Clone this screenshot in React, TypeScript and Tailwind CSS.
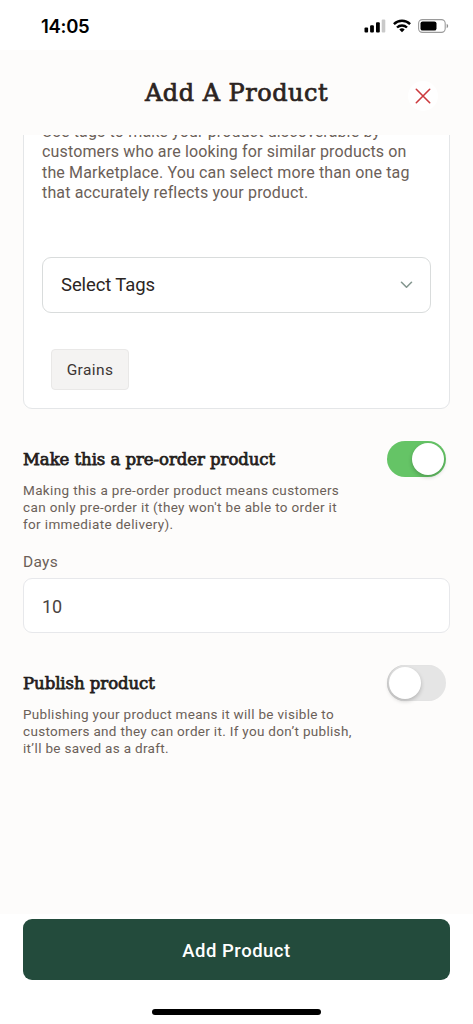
import { useState } from "react";

function StatusBar() {
  return (
    <div className="flex h-[50px] shrink-0 items-start justify-between bg-white pl-[41px] pr-[24px] pt-[13px]">
      <span className="font-['Inter',sans-serif] text-[18.5px] font-semibold leading-[26px] tracking-[-0.3px] text-black">14:05</span>
      <div className="flex items-center pt-[5px]">
        <svg width="22" height="16" viewBox="0 0 22 16">
          <rect x="0.5" y="9.5" width="3.6" height="5" rx="1" />
          <rect x="6.1" y="7.3" width="3.8" height="7.2" rx="1" />
          <rect x="12" y="4.2" width="3.8" height="10.3" rx="1" />
          <rect x="17.7" y="1.4" width="3.6" height="13.1" rx="1" fill="#c9c9c9" />
        </svg>
        <svg className="ml-[7px]" width="18" height="16" viewBox="0 0 18 16" fill="none" stroke="#000" strokeWidth="2.4">
          <path d="M0.9 6.1a11.6 11.6 0 0 1 16.2 0" />
          <path d="M4 9.5a7.2 7.2 0 0 1 10 0" />
          <path d="M9 14.3 6.3 11.5a4 4 0 0 1 5.4 0z" fill="#000" stroke="none" />
        </svg>
        <svg className="ml-[7px]" width="31" height="16" viewBox="0 0 31 16">
          <rect x="0.6" y="1.6" width="26.6" height="12.8" rx="3.8" fill="none" stroke="#9a9a9a" strokeWidth="1.1" />
          <rect x="2.5" y="3.4" width="16" height="9.2" rx="2.2" />
          <path d="M28.7 5.8c2 .8 2 3.6 0 4.4z" fill="#8c8c8c" />
        </svg>
      </div>
    </div>
  );
}

function Toggle({ on, onChange }: { on: boolean; onChange: () => void }) {
  return (
    <button
      role="switch"
      aria-checked={on}
      onClick={onChange}
      className={`mr-[4px] flex h-[36px] w-[59px] shrink-0 items-center rounded-full px-[2px] ${
        on ? "justify-end bg-[#65c466]" : "justify-start bg-[#e5e5e5] shadow-[inset_1px_0_1px_#cfcfcf]"
      }`}
    >
      <span className="h-[32px] w-[32px] rounded-full bg-white shadow-[0_2px_4px_rgba(0,0,0,0.22)]" />
    </button>
  );
}

export default function App() {
  const [preOrder, setPreOrder] = useState(true);
  const [publish, setPublish] = useState(false);

  return (
    <div className="flex h-screen w-full flex-col overflow-hidden bg-[#fdfcfb] font-['Roboto',sans-serif] text-[#6b6058]">
      <StatusBar />

      <div className="flex h-[85px] shrink-0 items-start">
        <div className="w-[65px]" />
        <h1 className="flex-1 whitespace-nowrap pt-[27px] text-center font-['DejaVu_Serif',serif] text-[24px] leading-[32px] tracking-[0.5px] text-[#2b2321] [-webkit-text-stroke:0.7px_#2b2321]">
          Add A Product
        </h1>
        <button aria-label="Close" className="mr-[35px] mt-[31px] flex h-[30px] w-[30px] items-center justify-center rounded-full bg-white">
          <svg width="16" height="16" viewBox="0 0 16 16" stroke="#cc3a3e" strokeWidth="1.6" strokeLinecap="round">
            <path d="M1.3 1.3 14.7 14.7M14.7 1.3 1.3 14.7" />
          </svg>
        </button>
      </div>

      {/* form, scrolled part of the way down */}
      <div className="flex-1 overflow-hidden px-[23px]">
        <div className="-mt-[34px] h-[308px] rounded-[9px] border border-[#e4e6e8] bg-white px-[18px] pt-[20px]">
          <p className="whitespace-nowrap text-[16px] leading-[20.4px] tracking-[0.15px]">
            Use tags to make your product discoverable by
            <br />
            customers who are looking for similar products on
            <br />
            the Marketplace. You can select more than one tag
            <br />
            that accurately reflects your product.
          </p>
          <button className="mt-[53px] flex h-[56px] w-full items-center justify-between rounded-[9px] border border-[#d9dcdc] pl-[18px] pr-[17px] text-[18.5px] tracking-[-0.1px] text-[#2b2523]">
            <span className="pt-[3px]">Select Tags</span>
            <svg width="13" height="8" viewBox="0 0 13 8" fill="none" stroke="#84968f" strokeWidth="1.6" strokeLinecap="round" strokeLinejoin="round">
              <path d="M1.5 1.3 6.5 6.2 11.5 1.3" />
            </svg>
          </button>
          <span className="ml-[9px] mt-[36px] flex h-[41px] w-[78px] items-center justify-center rounded-[4px] border border-[#e9e8e7] bg-[#f4f3f2] pt-[2px] text-[15.5px] tracking-[0.4px] text-[#3b3533]">
            Grains
          </span>
        </div>

        <div className="mt-[32px] flex justify-between">
          <div className="whitespace-nowrap">
            <h2 className="mt-[6px] font-['DejaVu_Serif',serif] text-[16.5px] leading-[26px] tracking-[-0.05px] text-[#241d1b] [-webkit-text-stroke:0.75px_#241d1b]">
              Make this a pre-order product
            </h2>
            <p className="mt-[9px] text-[13.5px] leading-[17px] tracking-[0.36px]">
              Making this a pre-order product means customers
              <br />
              can only pre-order it (they won't be able to order it
              <br />
              for immediate delivery).
            </p>
          </div>
          <Toggle on={preOrder} onChange={() => setPreOrder(!preOrder)} />
        </div>

        <label className="mt-[18px] block text-[15.5px] leading-[22px] tracking-[0.3px]">
          Days
          <input
            defaultValue="10"
            className="mt-[5px] block h-[55px] w-full rounded-[9px] border border-[#e7e8eb] bg-white px-[18px] pt-px text-[18px] tracking-[0px] text-[#4a4340]"
          />
        </label>

        <div className="mt-[32px] flex justify-between">
          <div className="whitespace-nowrap">
            <h2 className="mt-[6px] font-['DejaVu_Serif',serif] text-[16.5px] leading-[26px] tracking-[-0.05px] text-[#241d1b] [-webkit-text-stroke:0.75px_#241d1b]">
              Publish product
            </h2>
            <p className="mt-[9px] text-[13.5px] leading-[17px] tracking-[0.31px]">
              Publishing your product means it will be visible to
              <br />
              customers and they can order it. If you don’t publish,
              <br />
              it’ll be saved as a draft.
            </p>
          </div>
          <Toggle on={publish} onChange={() => setPublish(!publish)} />
        </div>
      </div>

      <div className="flex h-[110px] shrink-0 flex-col items-center bg-white px-[23px] pt-[5px]">
        <button className="h-[61px] w-full rounded-[9px] bg-[#234b3c] pt-[4px] text-[18.5px] font-medium tracking-[0.5px] text-white">
          Add Product
        </button>
        <div className="mt-[29px] h-[6px] w-[169px] rounded-full bg-black" />
      </div>
    </div>
  );
}
